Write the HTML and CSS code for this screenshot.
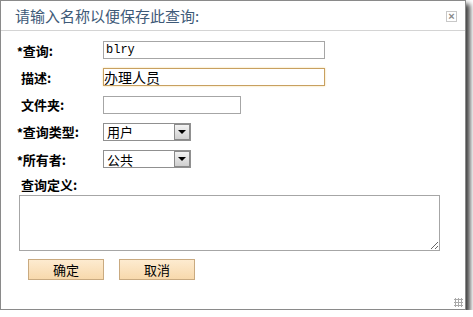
FILE: index.html
```html
<!DOCTYPE html>
<html lang="zh-CN">
<head>
    <meta charset="UTF-8">
    <title>保存查询</title>
    <link rel="stylesheet" href="styles.css">
</head>
<body>
    <div class="dialog">
        <div class="dialog-title">
            <span>请输入名称以便保存此查询:</span>
            <span class="close-btn">&times;</span>
        </div>

        <div class="form">
            <div class="row">
                <label class="label"><b class="req">*</b>查询:</label>
                <input class="field field-mono" type="text" value="blry">
            </div>
            <div class="row">
                <label class="label pad">描述:</label>
                <input class="field field-focus" type="text" value="办理人员">
            </div>
            <div class="row">
                <label class="label pad">文件夹:</label>
                <input class="field field-short" type="text" value="">
            </div>
            <div class="row">
                <label class="label"><b class="req">*</b>查询类型:</label>
                <div class="select"><span class="select-text">用户</span><span class="select-arrow"></span></div>
            </div>
            <div class="row">
                <label class="label"><b class="req">*</b>所有者:</label>
                <div class="select"><span class="select-text">公共</span><span class="select-arrow"></span></div>
            </div>

            <div class="def-label">查询定义:</div>
            <textarea class="def-area"></textarea>

            <div class="buttons">
                <button class="btn">确定</button>
                <button class="btn">取消</button>
            </div>
        </div>
        <div class="grip"></div>
    </div>
</body>
</html>
```

FILE: styles.css
```css
body {
    margin: 0;
    background: #fff;
    font-family: "Noto Sans CJK SC", "Liberation Sans", sans-serif;
    color: #000;
}

.dialog {
    position: relative;
    width: 464px;
    height: 308px;
    border: 1px solid #8a8a8a;
    background: #fff;
    box-shadow: 4px 4px 5px rgba(0,0,0,0.75);
}

.dialog-title {
    height: 29px;
    display: flex;
    align-items: center;
    justify-content: space-between;
    padding: 0 8px 0 14px;
    border-bottom: 1px solid #d4d4d4;
    font-size: 15px;
    color: #3e5a78;
}

.close-btn {
    width: 9px;
    height: 9px;
    border: 1px solid #c8c8c8;
    font-size: 11px;
    line-height: 8px;
    text-align: center;
    color: #888;
    font-family: "Liberation Sans", sans-serif;
    font-weight: bold;
    margin-top: 2px;
}

.form {
    padding: 10px 0 0 16px;
}

.row {
    display: flex;
    align-items: center;
    height: 18px;
    margin-bottom: 9.3px;
}

.label {
    width: 86px;
    font-size: 13px;
    font-weight: bold;
    white-space: nowrap;
}

.label.pad {
    padding-left: 4px;
    width: 82px;
}

.req {
    font-size: 11px;
}

.field {
    box-sizing: border-box;
    width: 222px;
    height: 18px;
    border: 1px solid #a6a6a6;
    padding: 0 2px;
    margin: 0;
    font-family: "Noto Sans CJK SC", sans-serif;
    font-size: 14px;
    outline: none;
}

.field-mono {
    font-family: "Liberation Mono", monospace;
    font-size: 12px;
}

.field-focus {
    border-color: #c8a060;
    box-shadow: 0 0 2px #f4d89a;
    padding-left: 0;
}

.field-short {
    width: 138px;
}

.select {
    box-sizing: border-box;
    width: 88px;
    height: 18px;
    border: 1px solid #909090;
    display: flex;
    align-items: center;
    justify-content: space-between;
    font-size: 13px;
    padding-left: 3px;
}

.select-arrow {
    position: relative;
    width: 16px;
    height: 16px;
    background: linear-gradient(#f2f2f2, #d0d0d0);
    border: 1px solid #8a8a8a;
    box-sizing: border-box;
}

.select-arrow::after {
    content: "";
    position: absolute;
    left: 3px;
    top: 5px;
    border-left: 4px solid transparent;
    border-right: 4px solid transparent;
    border-top: 4px solid #000;
}

.def-label {
    font-size: 13px;
    font-weight: bold;
    padding-left: 4px;
    margin-top: -1px;
    line-height: 18px;
}

.def-area {
    display: block;
    box-sizing: border-box;
    width: 421px;
    height: 56px;
    margin: 1px 0 0 2px;
    border: 1px solid #a6a6a6;
    resize: both;
}

.buttons {
    display: flex;
    gap: 15px;
    padding: 8px 0 0 11px;
}

.btn {
    width: 76px;
    height: 21px;
    border: 1px solid #c9aa80;
    background: linear-gradient(#fdebd0, #f8d9ac);
    font-family: "Noto Sans CJK SC", sans-serif;
    font-size: 13px;
    padding: 0;
    color: #000;
}

.grip {
    position: absolute;
    right: 2px;
    bottom: 2px;
    width: 9px;
    height: 9px;
    background: radial-gradient(circle, #aaa 1px, transparent 1.2px) 0 0 / 3px 3px;
}
```
